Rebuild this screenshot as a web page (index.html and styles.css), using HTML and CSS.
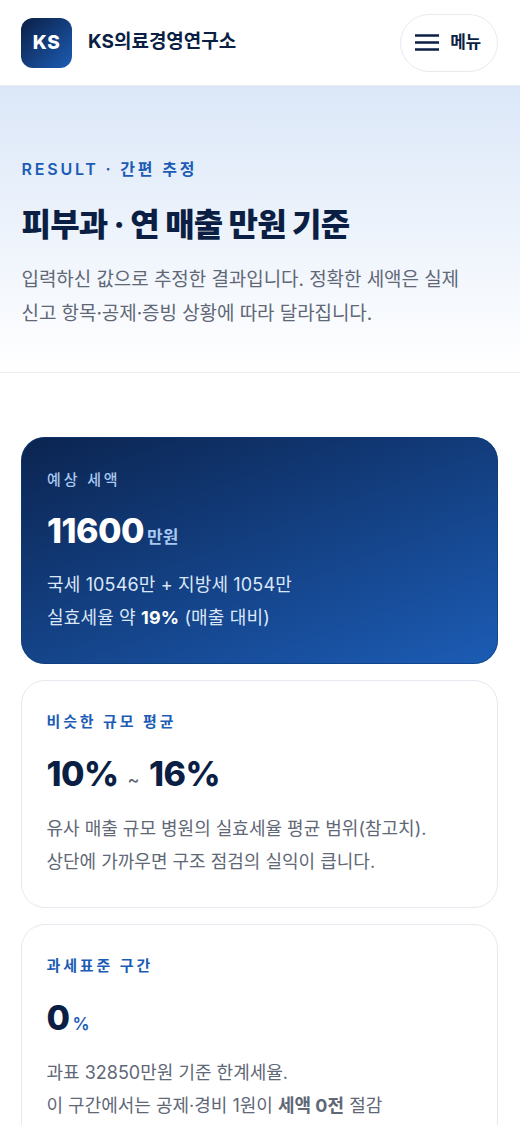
FILE: index.html
```html
<!DOCTYPE html>
<html lang="ko">
<head>
<meta charset="utf-8">
<title>KS의료경영연구소</title>
<link rel="stylesheet" href="styles.css">
</head>
<body>
<header class="topbar">
  <div class="brand">
    <div class="logo">KS</div>
    <div class="brand-name">KS의료경영연구소</div>
  </div>
  <button class="menu-btn">
    <svg class="menu-icon" width="24" height="17" viewBox="0 0 24 17"><path d="M0 1.5h24M0 8.5h24M0 15.5h24" stroke="#0b1f44" stroke-width="2.6" fill="none"/></svg>
    <span class="menu-text">메뉴</span>
  </button>
</header>
<section class="hero">
  <div class="eyebrow">RESULT · 간편 추정</div>
  <h1 class="title">피부과 · 연 매출 만원 기준</h1>
  <p class="desc">입력하신 값으로 추정한 결과입니다. 정확한 세액은 실제<br>신고 항목·공제·증빙 상황에 따라 달라집니다.</p>
</section>
<main class="cards">
  <article class="card card-dark">
    <div class="label label-light">예상 세액</div>
    <div class="value value-white">11600<span class="unit unit-light">만원</span></div>
    <p class="note note-light">국세 10546만 + 지방세 1054만<br>실효세율 약 <b>19%</b> (매출 대비)</p>
  </article>
  <article class="card">
    <div class="label">비슷한 규모 평균</div>
    <div class="value">10% <span class="tilde">~</span> 16%</div>
    <p class="note">유사 매출 규모 병원의 실효세율 평균 범위(참고치).<br>상단에 가까우면 구조 점검의 실익이 큽니다.</p>
  </article>
  <article class="card">
    <div class="label">과세표준 구간</div>
    <div class="value">0<span class="unit">%</span></div>
    <p class="note">과표 32850만원 기준 한계세율.<br>이 구간에서는 공제·경비 1원이 <b>세액 0전</b> 절감</p>
  </article>
</main>
</body>
</html>
```
FILE: styles.css
```css
* { box-sizing: border-box; }
html, body { margin: 0; padding: 0; }
body {
  background: #fff;
  font-family: Inter, "Noto Sans CJK KR", sans-serif;
  color: #0b1f44;
  height: 1125px;
  overflow: hidden;
}
.topbar {
  height: 86px;
  padding: 0 22px 0 21px;
  display: flex;
  align-items: center;
  justify-content: space-between;
  background: #fff;
  border-bottom: 1px solid #e9edf3;
}
.brand { display: flex; align-items: center; gap: 16px; }
.logo {
  width: 51px;
  height: 50px;
  border-radius: 12px;
  background: linear-gradient(135deg, #0b1f44, #1c5cb5);
  color: #fff;
  font-weight: 800;
  font-size: 19px;
  letter-spacing: 0.5px;
  display: flex;
  align-items: center;
  justify-content: center;
}
.brand-name {
  font-size: 19px;
  font-weight: 700;
  margin-top: -6px;
}
.menu-btn {
  width: 98px;
  height: 58px;
  border-radius: 29px;
  border: 1.5px solid #e8eaef;
  background: #fff;
  display: flex;
  align-items: center;
  justify-content: center;
  gap: 11px;
  font-family: inherit;
  font-size: 17px;
  font-weight: 700;
  color: #0b1f44;
  padding: 0 2px 0 0;
  letter-spacing: -0.3px;
}
.menu-text { margin-top: -5px; }
.hero {
  height: 287px;
  padding: 72px 21px 0 21.5px;
  background: linear-gradient(180deg, #dbe7f8 0%, #ffffff 100%);
  border-bottom: 1px solid #ebedf1;
}
.eyebrow {
  font-size: 16px;
  font-weight: 600;
  line-height: 22px;
  letter-spacing: 2.8px;
  color: #1c5cb5;
}
.title {
  margin: 24px 0 0;
  font-size: 32px;
  font-weight: 800;
  line-height: 42px;
  letter-spacing: -0.8px;
  color: #0b1f44;
}
.desc {
  margin: 17px 0 0;
  font-size: 19px;
  line-height: 34px;
  letter-spacing: -0.07px;
  color: #5f6877;
}
.cards {
  padding: 64px 22px 0 21px;
  display: flex;
  flex-direction: column;
  gap: 16px;
}
.card {
  min-height: 228px;
  padding: 30px 24px 0 24.5px;
  border: 1.5px solid #e6e9ef;
  border-radius: 24px;
  background: #fff;
}
.card-dark {
  min-height: 227px;
  border: 0;
  padding: 32px 26px 0;
  background: linear-gradient(160deg, #0b2450 0%, #1c5cb5 100%);
  box-shadow: inset 0 0 0 1px rgba(12, 60, 120, 0.6);
  color: #fff;
}
.label {
  font-size: 15px;
  font-weight: 600;
  line-height: 22px;
  letter-spacing: 2.85px;
  color: #1c5cb5;
}
.label-light { color: #a9c8f0; font-weight: 500; }
.value {
  margin-top: 17px;
  font-size: 34px;
  font-weight: 800;
  line-height: 48px;
  letter-spacing: -0.5px;
  color: #0b1f44;
}
.card-dark .value { margin-top: 16px; }
.value-white { color: #fff; }
.unit {
  margin-left: 3px;
  font-size: 17px;
  font-weight: 600;
  color: #1c5cb5;
  letter-spacing: 0;
}
.unit-light { color: #a9c8f0; }
.tilde {
  margin: 0 3px 0 2px;
  font-size: 18px;
  font-weight: 500;
  color: #5f6877;
}
.note {
  margin: 8px 0 0;
  font-size: 18px;
  line-height: 33px;
  letter-spacing: 0;
  color: #5f6877;
}
.note b { font-weight: 700; }
.note-light { margin-top: 7px; color: #dbe7f8; letter-spacing: 0.15px; }
.note-light b { color: #fff; }
```
